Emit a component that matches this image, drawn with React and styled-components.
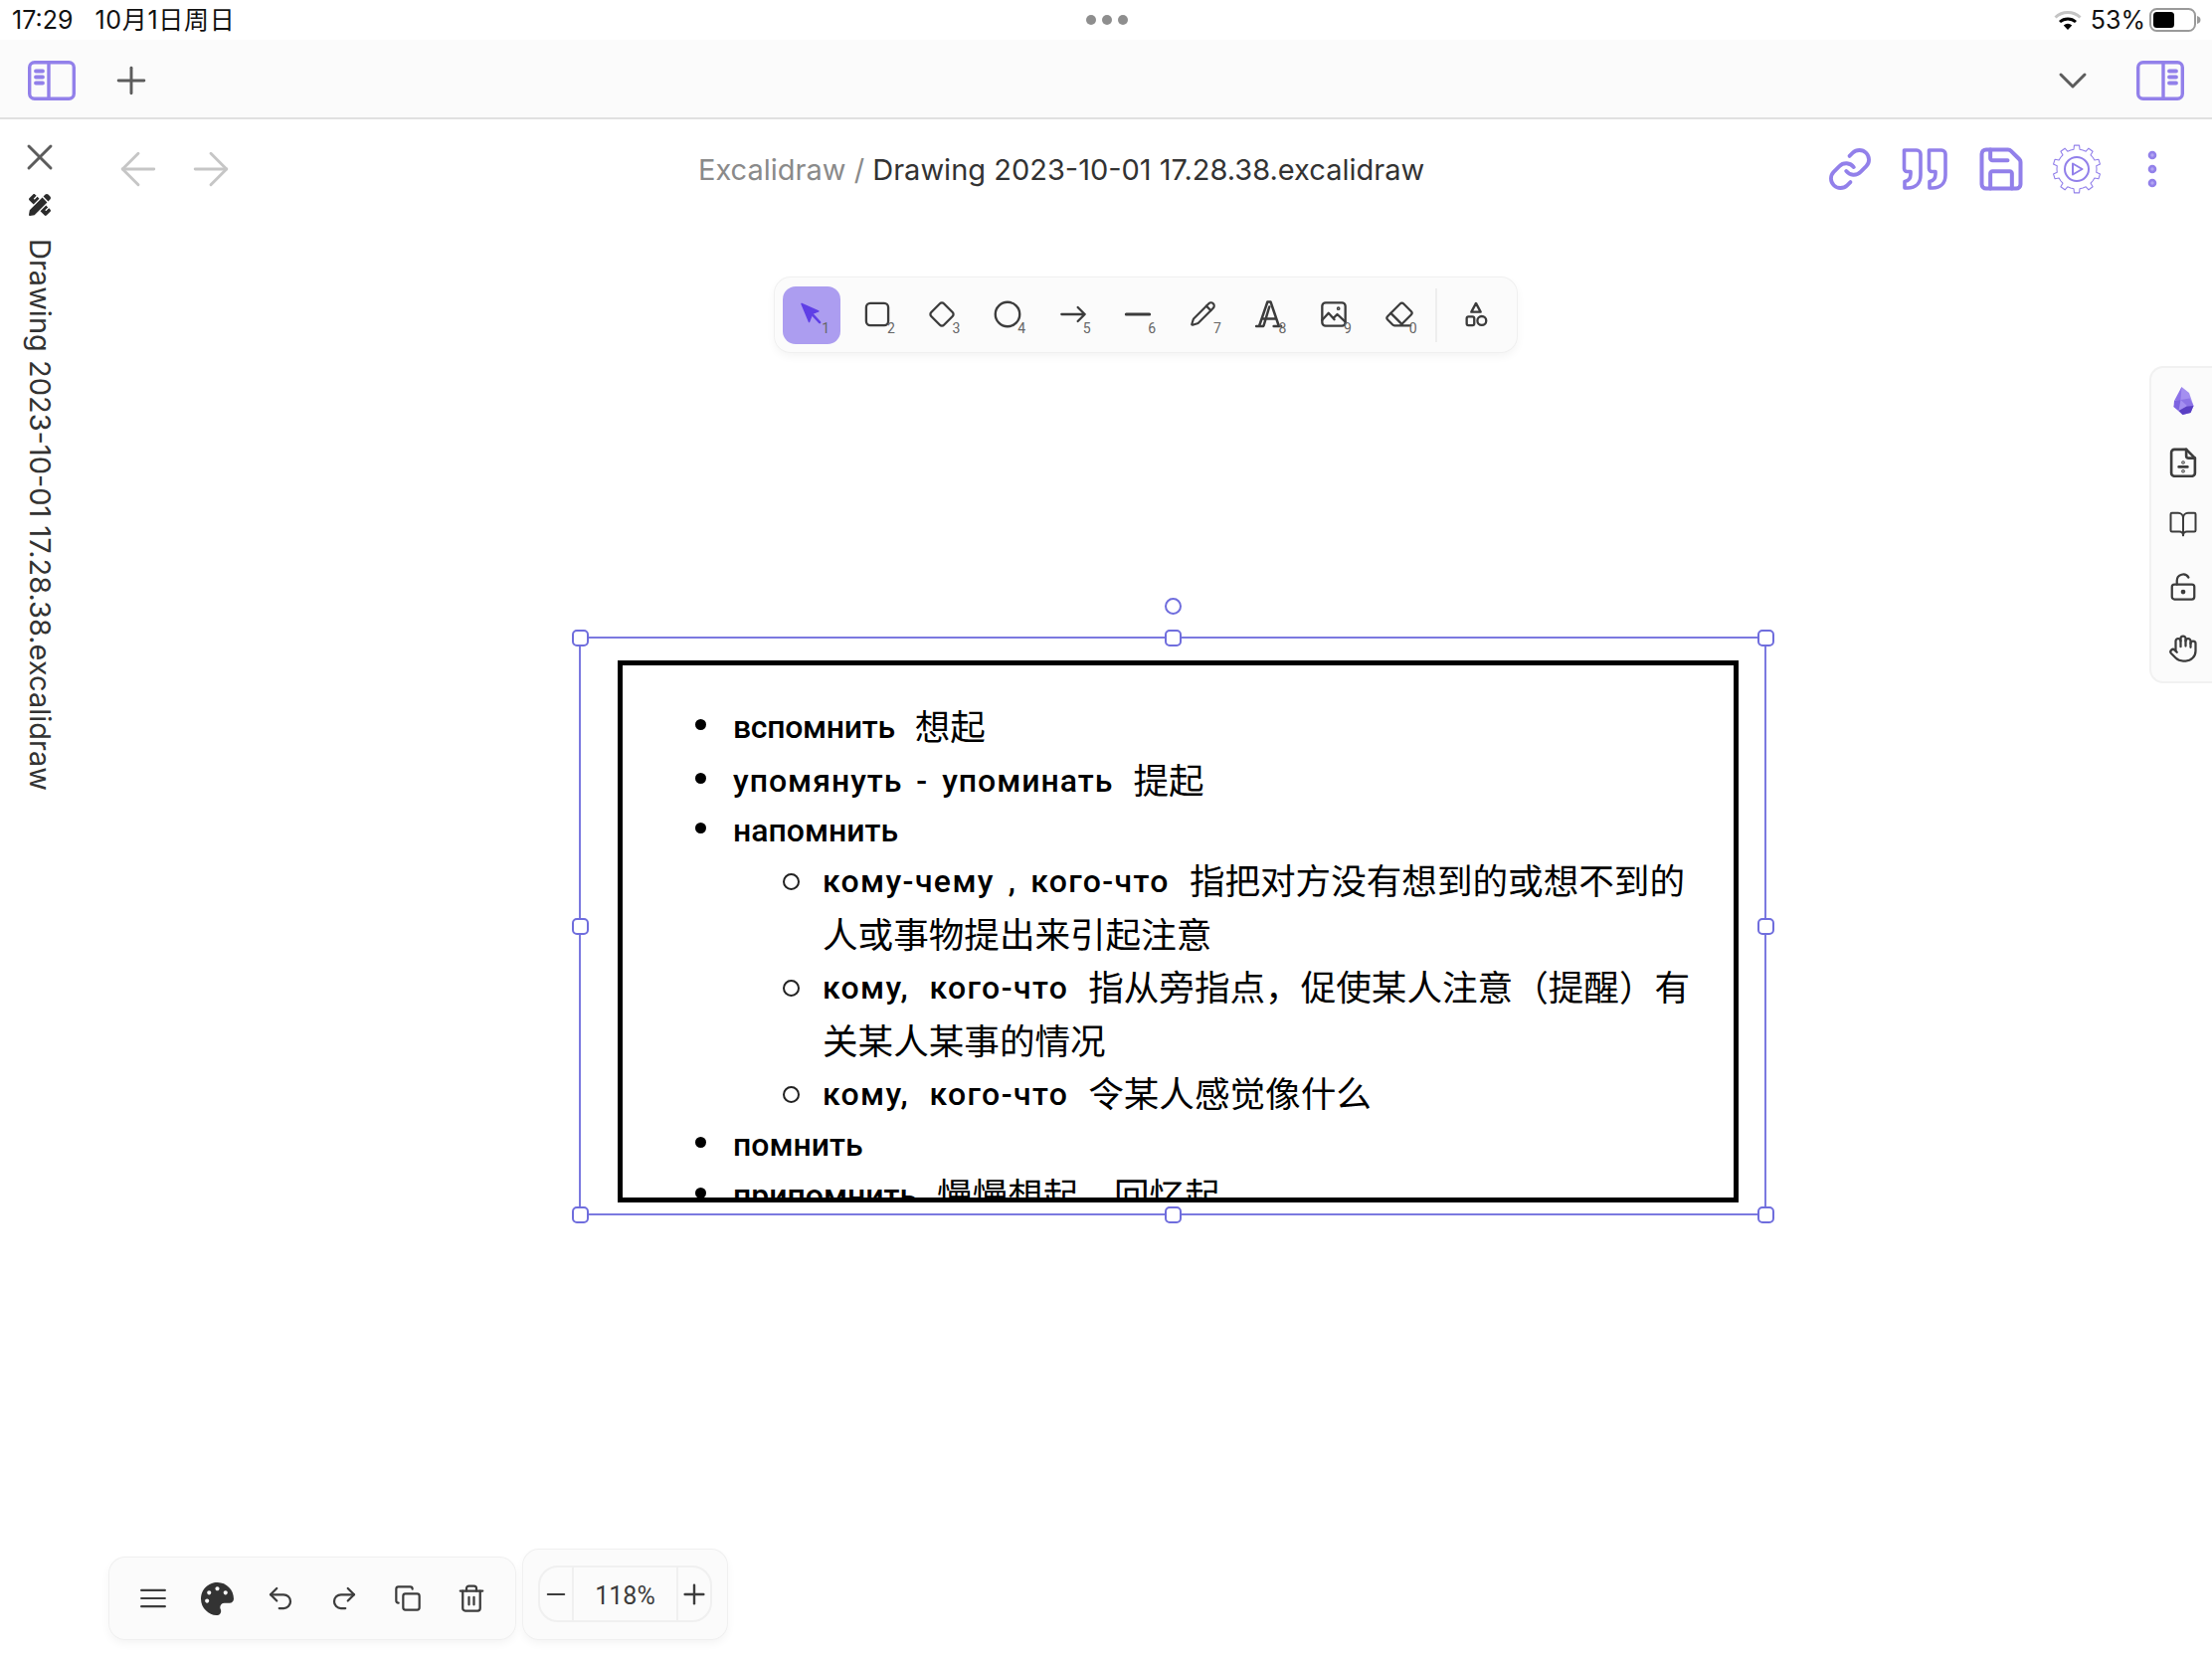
import React from "react";
import styled, { createGlobalStyle } from "styled-components";
import {
  ArrowLeft,
  ArrowRight,
  BookOpen,
  ChevronDown,
  Copy,
  Eraser,
  Hand,
  Link,
  LockKeyholeOpen,
  Minus,
  Pencil,
  Plus,
  Redo2,
  Save,
  Trash2,
  Undo2,
  X,
} from "lucide-react";
import { FaPalette, FaPencilRuler } from "react-icons/fa";

const PURPLE = "#9280ea";
const INK = "#3c3c3c";
const SANS = '"Inter", "Noto Sans CJK SC", sans-serif';

const GlobalStyle = createGlobalStyle`
  html, body {
    margin: 0;
    background: #fff;
  }
  * {
    box-sizing: border-box;
  }
`;

const Page = styled.div`
  width: 2224px;
  height: 1668px;
  overflow: hidden;
  display: flex;
  flex-direction: column;
  background: #fff;
  font-family: ${SANS};
  color: #111;
`;

const StatusBar = styled.div`
  height: 40px;
  padding: 0 11px 0 12px;
  display: grid;
  grid-template-columns: 1fr auto 1fr;
  align-items: center;
  font-size: 25px;
  line-height: 40px;
`;

const StatusLeft = styled.div`
  display: flex;
  gap: 22px;
  height: 40px;
`;

const StatusDate = styled.span`
  letter-spacing: 0.7px;
`;

const StatusDots = styled.div`
  display: flex;
  gap: 6px;
  span {
    width: 10px;
    height: 10px;
    border-radius: 50%;
    background: #8e8e8e;
  }
`;

const StatusRight = styled.div`
  display: flex;
  align-items: center;
  justify-content: flex-end;
  gap: 4px;
  svg:first-child {
    margin-right: 5px;
  }
`;

const TabBar = styled.div`
  height: 80px;
  padding: 4px 28px 0;
  display: flex;
  align-items: center;
  background: #fbfbfb;
  border-bottom: 2px solid #e0e0e0;
`;

const TabPlus = styled.div`
  margin-left: 34px;
  display: flex;
  color: #5c5c5c;
`;

const TabChevron = styled.div`
  margin-left: auto;
  margin-right: 40px;
  display: flex;
  color: #5c5c5c;
`;

const Body = styled.div`
  flex: 1;
  display: flex;
  min-height: 0;
`;

const Rail = styled.div`
  width: 80px;
  padding-top: 16px;
  display: flex;
  flex-direction: column;
  align-items: center;
  color: #5c5c5c;
`;

const RailTool = styled.div`
  margin-top: 15px;
  display: flex;
  color: #2b2b2b;
`;

const RailTitle = styled.div`
  margin-top: 23px;
  writing-mode: vertical-rl;
  font-size: 29px;
  line-height: 30px;
  color: #333;
  white-space: nowrap;
`;

const Main = styled.div`
  flex: 1;
  display: flex;
  flex-direction: column;
  min-width: 0;
`;

const Header = styled.div`
  height: 100px;
  padding: 0 36px 0 32px;
  display: flex;
  align-items: center;
`;

const Nav = styled.div`
  display: flex;
  gap: 19px;
  color: #c6c6c6;
`;

const Title = styled.div`
  margin-left: 463px;
  font-size: 29px;
  color: #333;
  white-space: nowrap;
`;

const TitleParent = styled.span`
  color: #8a8a8a;
`;

const Actions = styled.div`
  margin-left: auto;
  display: flex;
  gap: 28px;
  color: ${PURPLE};
`;

const ActionButton = styled.div`
  width: 48px;
  height: 48px;
  display: flex;
  align-items: center;
  justify-content: center;
  svg {
    flex-shrink: 0;
  }
`;

const Canvas = styled.div`
  position: relative;
  flex: 1;
  display: flex;
  flex-direction: column;
`;

const Toolbar = styled.div`
  align-self: center;
  margin-top: 59px;
  height: 75px;
  padding: 9px 12px 8px 8px;
  display: flex;
  gap: 7.6px;
  background: #fbfbfb;
  border-radius: 16px;
  box-shadow: 0 0 0 1px #f0f0f0, 0 4px 10px rgba(0, 0, 0, 0.05);
`;

const ToolButton = styled.div`
  position: relative;
  width: 58px;
  height: 58px;
  padding-bottom: 3px;
  display: flex;
  align-items: center;
  justify-content: center;
  border-radius: 13px;
  background: ${(p) => (p.$active ? "#ac9df0" : "transparent")};
  color: ${INK};
`;

const ToolKey = styled.span`
  position: absolute;
  right: 11px;
  bottom: 9px;
  font-family: "Roboto", sans-serif;
  font-size: 14px;
  line-height: 13px;
  color: #666;
`;

const ToolDivider = styled.div`
  width: 2px;
  margin: 2px 2px 2px 0;
  background: #eeeeee;
`;

const SidePanel = styled.div`
  position: absolute;
  top: 148px;
  right: 0;
  width: 63px;
  padding: 2px 0 2px 3px;
  display: flex;
  flex-direction: column;
  background: #fbfbfb;
  border: 2px solid #f1f1f1;
  border-right: none;
  border-radius: 14px 0 0 14px;
  color: ${INK};
`;

const SideButton = styled.div`
  height: 62.2px;
  display: flex;
  align-items: center;
  justify-content: center;
`;

const Selection = styled.div`
  position: absolute;
  left: 502px;
  top: 420px;
  width: 1194px;
  height: 582px;
  border: 2px solid #7b79e0;
  padding: 22px 0 0 37px;
`;

const Handle = styled.div`
  position: absolute;
  width: 17px;
  height: 17px;
  left: calc(-9.5px + (100% + 2px) * ${(p) => p.$x});
  top: calc(-9.5px + (100% + 2px) * ${(p) => p.$y});
  background: #fff;
  border: 2px solid #6f6ddd;
  border-radius: 5px;
`;

const RotateHandle = styled.div`
  position: absolute;
  width: 17px;
  height: 17px;
  left: calc(50% - 8.5px);
  top: -41.5px;
  background: #fff;
  border: 2px solid #6f6ddd;
  border-radius: 50%;
`;

const NoteFrame = styled.div`
  width: 1127px;
  height: 545px;
  border: 5px solid #000;
  overflow: hidden;
  background: #fff;
  padding: 33px 33px 0 111px;
  font-family: "Noto Sans CJK SC", sans-serif;
  font-size: 35.6px;
  color: #000;
`;

const NoteList = styled.ul`
  list-style: none;
  margin: 0 0 0 ${(p) => (p.$nested ? "90px" : "0")};
  padding: 0;
`;

const NoteItem = styled.li`
  position: relative;
  line-height: ${(p) => (p.$short ? "48px" : "53.5px")};

  &::before {
    content: "";
    position: absolute;
    left: ${(p) => (p.$ring ? "-40px" : "-38px")};
    top: ${(p) => (p.$ring ? "21px" : p.$short ? "18px" : "21px")};
    width: ${(p) => (p.$ring ? "13px" : "11px")};
    height: ${(p) => (p.$ring ? "13px" : "11px")};
    border-radius: 50%;
    background: ${(p) => (p.$ring ? "transparent" : "#000")};
    border: ${(p) => (p.$ring ? "2.5px solid #222" : "none")};
  }
`;

const Script = styled.span`
  font-family: "Roboto", "Noto Sans", sans-serif;
  font-weight: 500;
  font-size: 32px;
  line-height: 1;
  margin-right: 20px;
  vertical-align: 2px;
  letter-spacing: ${(p) => p.$track || 0}px;
  word-spacing: ${(p) => p.$gap || 0}px;
`;

const BottomBar = styled.div`
  position: absolute;
  left: 30px;
  bottom: 20px;
  display: flex;
  align-items: flex-end;
  gap: 8px;
`;

const Panel = styled.div`
  background: #fbfbfb;
  border-radius: 16px;
  box-shadow: 0 0 0 1px #f0f0f0, 0 4px 10px rgba(0, 0, 0, 0.05);
`;

const ActionsPanel = styled(Panel)`
  height: 82px;
  width: 408px;
  padding: 0 12px;
  display: flex;
  align-items: center;
  color: ${INK};
`;

const PanelButton = styled.div`
  width: 64px;
  display: flex;
  align-items: center;
  justify-content: center;
`;

const ZoomPanel = styled(Panel)`
  height: 90px;
  width: 205px;
  padding: 16px 15px 17px;
`;

const ZoomControl = styled.div`
  height: 57px;
  display: flex;
  border: 2px solid #f0f0f0;
  border-radius: 20px;
  color: ${INK};
`;

const ZoomButton = styled.div`
  width: 32px;
  display: flex;
  align-items: center;
  justify-content: center;
  flex-shrink: 0;
`;

const ZoomValue = styled.div`
  flex: 1;
  display: flex;
  align-items: center;
  justify-content: center;
  padding-top: 3px;
  border-left: 2px solid #f0f0f0;
  border-right: 2px solid #f0f0f0;
  font-family: "Roboto", sans-serif;
  font-size: 25px;
`;

// drawings that the icon packages don't have
const Svg = ({ size = 28, vb = "0 0 24 24", sw = 2, children }) => (
  <svg
    width={size}
    height={size}
    viewBox={vb}
    fill="none"
    stroke="currentColor"
    strokeWidth={sw}
    strokeLinecap="round"
    strokeLinejoin="round"
  >
    {children}
  </svg>
);

const PaneIcon = ({ flip }) => (
  <svg width="48" height="40" viewBox="0 0 48 40" fill="none" stroke={PURPLE} strokeWidth="3.4">
    <g transform={flip ? "translate(48 0) scale(-1 1)" : undefined}>
      <rect x="1.7" y="1.7" width="44.6" height="36.6" rx="5" />
      <path d="M21 1.500v37" />
      <path d="M8 10.500h7M8 16.500h7M8 22.500h7" strokeWidth="3.8" strokeLinecap="round" />
    </g>
  </svg>
);

const Wifi = () => (
  <svg width="28" height="20" viewBox="0 0 28 20" fill="none">
    <path d="M1.500 7.500a18 18 0 0 1 25 0" stroke="#c4c4c4" strokeWidth="3" />
    <path d="M6 12a12 12 0 0 1 16 0" stroke="#000" strokeWidth="3" />
    <path d="M14 20l-4.200-4.600a6 6 0 0 1 8.400 0z" fill="#000" />
  </svg>
);

const Battery = () => (
  <svg width="52" height="24" viewBox="0 0 52 24" fill="none">
    <rect x="1" y="1" width="45" height="22" rx="6.500" stroke="#9a9a9a" strokeWidth="2" />
    <rect x="4" y="4" width="21" height="16" rx="3.500" fill="#000" />
    <path d="M48 8c2.500.8 3.500 2 3.500 4s-1 3.200-3.500 4z" fill="#9a9a9a" />
  </svg>
);

const QuoteIcon = () => (
  <svg width="48" height="42" viewBox="0 0 48 42" fill="none" stroke="currentColor" strokeWidth="3.6" strokeLinejoin="round">
    <path d="M2.500 2h12.500a4 4 0 0 1 4 4v21c0 8-5 13-13 13H3v-6.500c3.500-.5 6-3 6-7.500v-2.500H5.500a3 3 0 0 1-3-3z" />
    <path d="M27.500 2h12.500a4 4 0 0 1 4 4v21c0 8-5 13-13 13h-3v-6.500c3.500-.5 6-3 6-7.500v-2.500h-3.500a3 3 0 0 1-3-3z" />
  </svg>
);

const gearPath = (teeth, outer, inner, c) => {
  const pts = [];
  const step = (Math.PI * 2) / teeth;
  for (let i = 0; i < teeth; i++) {
    const a = i * step - Math.PI / 2;
    const at = (r, o) => `${(c + r * Math.cos(a + o)).toFixed(2)} ${(c + r * Math.sin(a + o)).toFixed(2)}`;
    pts.push(at(inner, -step * 0.5), at(inner, -step * 0.24), at(outer, -step * 0.17), at(outer, step * 0.17), at(inner, step * 0.24));
  }
  return `M${pts.join("L")}Z`;
};

const GearPlayIcon = () => (
  <svg width="50" height="50" viewBox="0 0 50 50" fill="none" stroke="currentColor" strokeLinejoin="round">
    <path d={gearPath(10, 24, 20, 25)} strokeWidth="1.1" />
    <circle cx="25" cy="25" r="12" strokeWidth="2" />
    <path d="M21 19.500l9.500 5.500-9.500 5.500z" strokeWidth="2" />
  </svg>
);

const DotsIcon = () => (
  <svg width="48" height="48" viewBox="0 0 48 48" fill="#b3a6f2" stroke="currentColor" strokeWidth="2.6">
    <circle cx="24" cy="10" r="3" />
    <circle cx="24" cy="24" r="3" />
    <circle cx="24" cy="38" r="3" />
  </svg>
);

const CursorIcon = () => (
  <svg width="30" height="30" viewBox="0 0 24 24" fill="#5f3fe6" stroke="#5f3fe6" strokeWidth="1.2" strokeLinejoin="round">
    <path d="M4 3.500l13.500 6-5 2-2.500 6.500z" />
    <path d="M12 11.500l6.500 7" strokeWidth="2" strokeLinecap="round" />
  </svg>
);

const TextToolIcon = () => (
  <Svg size={30} sw={2}>
    <path d="M11.500 2L5 21M11.500 2h2.500L20.500 21M13 6L8.500 21M7 15.500h10.500" />
    <path d="M2.500 21.500h5.500M16.500 21.500h6" />
  </Svg>
);

const ImageToolIcon = () => (
  <Svg sw={2}>
    <rect x="2" y="2" width="20" height="20" rx="3" />
    <path d="M2 17l5.500-6 5 5.500M12 15l3-3 7 6.500" />
    <circle cx="16" cy="7" r="0.6" />
  </Svg>
);

const ShapesIcon = () => (
  <Svg sw={2}>
    <path d="M12 2.500l4 7.500H8z" />
    <rect x="4" y="14" width="6.500" height="7.500" rx="1.500" />
    <circle cx="17" cy="17.500" r="3.800" />
  </Svg>
);

const ObsidianIcon = () => (
  <svg width="24" height="30" viewBox="0 0 24 30">
    <path d="M10.500 1L18 7l4.500 13-3 7-8 2-9-8 2-6z" fill="#a48ff0" />
    <path d="M3 15l7.500-14-1 13z" fill="#8c72e8" />
    <path d="M9.500 14l-6.500 1-.500 6 5 4z" fill="#7d63e0" />
    <path d="M9.500 14l9-1.500 4 7.500-6 .500z" fill="#8d74e6" />
    <path d="M7.500 25l8-4.500 7-.500-3 7-8 2z" fill="#5a3fc4" />
  </svg>
);

const FileDivideIcon = () => (
  <Svg size={30} sw={2.1}>
    <path d="M14.500 1.500H5a2.500 2.500 0 0 0-2.500 2.500v16.500A2.500 2.500 0 0 0 5 23h14a2.500 2.500 0 0 0 2.500-2.500V8.500z" />
    <path d="M14.500 1.500v5a2 2 0 0 0 2 2h5" />
    <path d="M8.500 15.500h7" />
    <circle cx="12" cy="12" r="0.4" />
    <circle cx="12" cy="19" r="0.4" />
  </Svg>
);

const MenuIcon = () => (
  <Svg size={26} sw={1.9}>
    <path d="M1 4.500h22M1 12h22M1 19.500h22" />
  </Svg>
);

const tools = [
  { key: "2", icon: <Svg><rect x="2.500" y="2.500" width="19" height="19" rx="3.500" /></Svg> },
  { key: "3", icon: <Svg><path d="M10.300 2.800a2.400 2.400 0 0 1 3.400 0l7.500 7.500a2.400 2.400 0 0 1 0 3.400l-7.500 7.500a2.400 2.400 0 0 1-3.400 0l-7.500-7.500a2.400 2.400 0 0 1 0-3.400z" /></Svg> },
  { key: "4", icon: <Svg><circle cx="12" cy="12" r="10.500" /></Svg> },
  { key: "5", icon: <Svg><path d="M2 12h20M16 6l6 6-6 6" /></Svg> },
  { key: "6", icon: <Svg sw={2.6}><path d="M2 12h20" /></Svg> },
  { key: "7", icon: <Pencil size={27} strokeWidth={1.9} /> },
  { key: "8", icon: <TextToolIcon /> },
  { key: "9", icon: <ImageToolIcon /> },
  { key: "0", icon: <Eraser size={30} strokeWidth={1.8} /> },
];

const handles = [
  [0, 0],
  [0.5, 0],
  [1, 0],
  [0, 0.5],
  [1, 0.5],
  [0, 1],
  [0.5, 1],
  [1, 1],
];

const App = () => {
  return (
    <Page>
      <GlobalStyle />
      <StatusBar>
        <StatusLeft>
          <span>17:29</span>
          <StatusDate>10月1日周日</StatusDate>
        </StatusLeft>
        <StatusDots>
          <span />
          <span />
          <span />
        </StatusDots>
        <StatusRight>
          <Wifi />
          <span>53%</span>
          <Battery />
        </StatusRight>
      </StatusBar>

      <TabBar>
        <PaneIcon />
        <TabPlus>
          <Plus size={44} strokeWidth={1.6} />
        </TabPlus>
        <TabChevron>
          <ChevronDown size={48} strokeWidth={1.5} />
        </TabChevron>
        <PaneIcon flip />
      </TabBar>

      <Body>
        <Rail>
          <X size={44} strokeWidth={1.6} />
          <RailTool>
            <FaPencilRuler size={22} />
          </RailTool>
          <RailTitle>Drawing 2023-10-01 17.28.38.excalidraw</RailTitle>
        </Rail>

        <Main>
          <Header>
            <Nav>
              <ArrowLeft size={54} strokeWidth={1.3} />
              <ArrowRight size={54} strokeWidth={1.3} />
            </Nav>
            <Title>
              <TitleParent>Excalidraw / </TitleParent>
              Drawing 2023-10-01 17.28.38.excalidraw
            </Title>
            <Actions>
              <ActionButton>
                <Link size={46} strokeWidth={2} />
              </ActionButton>
              <ActionButton>
                <QuoteIcon />
              </ActionButton>
              <ActionButton>
                <Save size={52} strokeWidth={1.85} />
              </ActionButton>
              <ActionButton>
                <GearPlayIcon />
              </ActionButton>
              <ActionButton>
                <DotsIcon />
              </ActionButton>
            </Actions>
          </Header>

          <Canvas>
            <Toolbar>
              <ToolButton $active>
                <CursorIcon />
                <ToolKey>1</ToolKey>
              </ToolButton>
              {tools.map((tool) => (
                <ToolButton key={tool.key}>
                  {tool.icon}
                  <ToolKey>{tool.key}</ToolKey>
                </ToolButton>
              ))}
              <ToolDivider />
              <ToolButton>
                <ShapesIcon />
              </ToolButton>
            </Toolbar>

            <SidePanel>
              <SideButton>
                <ObsidianIcon />
              </SideButton>
              <SideButton>
                <FileDivideIcon />
              </SideButton>
              <SideButton>
                <BookOpen size={30} strokeWidth={1.6} />
              </SideButton>
              <SideButton>
                <LockKeyholeOpen size={30} strokeWidth={1.8} />
              </SideButton>
              <SideButton>
                <Hand size={30} strokeWidth={1.8} />
              </SideButton>
            </SidePanel>

            <Selection>
              <RotateHandle />
              {handles.map(([x, y]) => (
                <Handle key={`${x}-${y}`} $x={x} $y={y} />
              ))}
              <NoteFrame>
                <NoteList>
                  <NoteItem>
                    <Script $track={-0.3}>вспомнить</Script>想起
                  </NoteItem>
                  <NoteItem>
                    <Script $track={1} $gap={5}>упомянуть - упоминать</Script>提起
                  </NoteItem>
                  <NoteItem $short>
                    <Script>напомнить</Script>
                  </NoteItem>
                  <NoteList $nested>
                    <NoteItem $ring>
                      <Script $track={1.4} $gap={4.5}>кому-чему , кого-что</Script>指把对方没有想到的或想不到的人或事物提出来引起注意
                    </NoteItem>
                    <NoteItem $ring>
                      <Script $track={1.4} $gap={11}>кому, кого-что</Script>指从旁指点，促使某人注意（提醒）有关某人某事的情况
                    </NoteItem>
                    <NoteItem $ring>
                      <Script $track={1.4} $gap={11}>кому, кого-что</Script>令某人感觉像什么
                    </NoteItem>
                  </NoteList>
                  <NoteItem $short>
                    <Script>помнить</Script>
                  </NoteItem>
                  <NoteItem>
                    <Script>припомнить</Script>慢慢想起，回忆起
                  </NoteItem>
                </NoteList>
              </NoteFrame>
            </Selection>

            <BottomBar>
              <ActionsPanel>
                <PanelButton>
                  <MenuIcon />
                </PanelButton>
                <PanelButton>
                  <FaPalette size={33} color="#333" />
                </PanelButton>
                <PanelButton>
                  <Undo2 size={30} strokeWidth={1.8} />
                </PanelButton>
                <PanelButton>
                  <Redo2 size={30} strokeWidth={1.8} />
                </PanelButton>
                <PanelButton>
                  <Copy size={28} strokeWidth={1.9} />
                </PanelButton>
                <PanelButton>
                  <Trash2 size={30} strokeWidth={1.8} />
                </PanelButton>
              </ActionsPanel>
              <ZoomPanel>
                <ZoomControl>
                  <ZoomButton>
                    <Minus size={28} strokeWidth={1.9} />
                  </ZoomButton>
                  <ZoomValue>118%</ZoomValue>
                  <ZoomButton>
                    <Plus size={32} strokeWidth={1.8} />
                  </ZoomButton>
                </ZoomControl>
              </ZoomPanel>
            </BottomBar>
          </Canvas>
        </Main>
      </Body>
    </Page>
  );
};

export default App;
